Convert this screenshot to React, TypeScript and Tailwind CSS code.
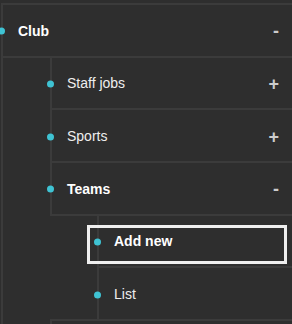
import React from 'react';

type Node = {
  label: string;
  bold?: boolean;
  toggle?: '+' | '-';
  focused?: boolean;
};

const Row: React.FC<{ node: Node; bordered?: boolean }> = ({ node, bordered = true }) => (
  <div
    className={`relative flex items-center pt-[2px] pl-[15px] pr-[13px] border-l-2 border-[#3b3b3b] ${
      bordered ? 'h-[52.67px] border-b-2' : 'h-[50.67px]'
    }`}
  >
    {/* dot sits on the left rail */}
    <span className="absolute -left-[5px] top-[calc(50%+1px)] -translate-y-1/2 w-[7px] h-[7px] rounded-full bg-[#3fc3d3]" />
    {node.focused && (
      <span className="absolute -left-[12px] right-[5px] top-[9px] h-[39px] border-[3px] border-[#efefef] pointer-events-none" />
    )}
    <span className={`flex-1 text-[14px] ${node.bold ? 'font-bold text-white' : 'text-[#eeeeee]'}`}>
      {node.label}
    </span>
    {node.toggle && (
      <span className="text-[18px] font-bold leading-none text-[#cccccc]">{node.toggle}</span>
    )}
  </div>
);

export default function App() {
  return (
    <div
      className="min-h-screen w-[292px] h-[324px] overflow-hidden bg-[#2e2e2e] pt-[3px]"
      style={{ fontFamily: '"Liberation Sans", Arial, sans-serif' }}
    >
      <div className="ml-px border-l-2 border-t-2 border-[#3b3b3b]">
        {/* Club */}
        <div className="relative flex items-center h-[52.67px] pt-[2px] pl-[15px] pr-[13px] border-b-2 border-[#3b3b3b]">
          <span className="absolute -left-[5px] top-[calc(50%+1px)] -translate-y-1/2 w-[7px] h-[7px] rounded-full bg-[#3fc3d3]" />
          <span className="flex-1 text-[14px] font-bold text-white">Club</span>
          <span className="text-[18px] font-bold leading-none text-[#cccccc]">-</span>
        </div>

        <div className="ml-[47px]">
          <Row node={{ label: 'Staff jobs', toggle: '+' }} />
          <Row node={{ label: 'Sports', toggle: '+' }} />
          <Row node={{ label: 'Teams', bold: true, toggle: '-' }} />

          {/* Teams children */}
          <div className="pl-[47px] border-b-2 border-[#3b3b3b]">
            <Row node={{ label: 'Add new', bold: true, focused: true }} />
            <Row node={{ label: 'List' }} bordered={false} />
          </div>

          <div className="h-[52.67px] border-l-2 border-[#3b3b3b]" />
        </div>
      </div>
    </div>
  );
}
